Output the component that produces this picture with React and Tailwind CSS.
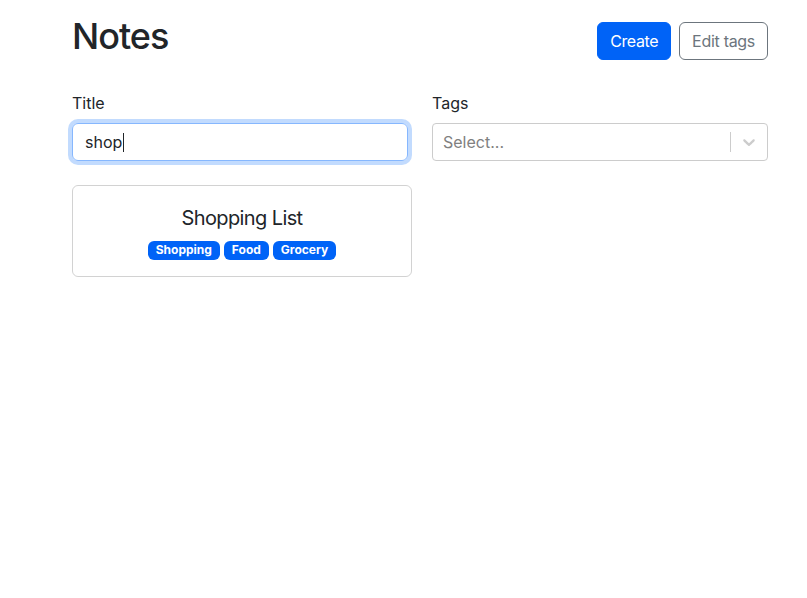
const tags = ["Shopping", "Food", "Grocery"];

const App = () => {
  return (
    <div className="min-h-screen bg-white font-['Inter','Liberation_Sans',sans-serif] text-[16px] text-[#212529]">
      <div className="ml-[72px] w-[696px] pt-[16px]">
        <div className="mb-[25px] flex h-[50px] justify-between">
          <h1 className="mt-[2px] text-[36px] leading-[37px] font-medium tracking-[-1px]">Notes</h1>
          <div className="flex gap-2 self-center">
            <button className="h-[38px] rounded-[6px] border border-[#0063f7] bg-[#0063f7] px-3 leading-6 tracking-[-0.4px] text-white">
              Create
            </button>
            <button className="h-[38px] rounded-[6px] border border-[#6c757d] bg-white px-3 leading-6 tracking-[-0.3px] text-[#6c757d]">
              Edit tags
            </button>
          </div>
        </div>

        <div className="mb-6 grid grid-cols-2 gap-x-6">
          <div>
            <label className="mb-2 block leading-6">Title</label>
            <div className="flex h-[38px] items-center rounded-[6px] border border-[#86b7fe] px-3 shadow-[0_0_0_4px_rgba(13,110,253,0.25)]">
              <span className="leading-6">shop</span>
              <span className="ml-[1px] h-[19px] w-px bg-[#212529]"></span>
            </div>
          </div>
          <div>
            <label className="mb-2 block leading-6">Tags</label>
            <div className="flex h-[38px] items-center rounded-[4px] border border-[#cccccc]">
              <div className="flex-1 pl-[10px] leading-6 text-[#808080]">Select...</div>
              <span className="h-[20px] w-px self-center bg-[#cccccc]"></span>
              <div className="p-2">
                <svg viewBox="0 0 20 20" width="20" height="20" fill="#cccccc">
                  <path d="M4.516 7.548c0.436-0.446 1.043-0.481 1.576 0l3.908 3.747 3.908-3.747c0.533-0.481 1.141-0.446 1.574 0 0.436 0.445 0.408 1.197 0 1.615-0.406 0.418-4.695 4.502-4.695 4.502-0.217 0.223-0.502 0.335-0.787 0.335s-0.57-0.112-0.789-0.335c0 0-4.287-4.084-4.695-4.502s-0.436-1.17 0-1.615z" />
                </svg>
              </div>
            </div>
          </div>
        </div>

        <div className="grid grid-cols-2 gap-4">
          <div className="flex h-[92px] flex-col items-center justify-center gap-2 rounded-[6px] border border-black/[0.175]">
            <span className="text-[20px] leading-[30px] tracking-[-0.6px]">Shopping List</span>
            <div className="flex gap-1">
              {tags.map((tag) => (
                <span key={tag} className="rounded-[6px] bg-[#0063f7] px-[8px] py-[3.5px] text-[12px] leading-[12px] font-bold text-white">
                  {tag}
                </span>
              ))}
            </div>
          </div>
        </div>
      </div>
    </div>
  );
};

export default App;
